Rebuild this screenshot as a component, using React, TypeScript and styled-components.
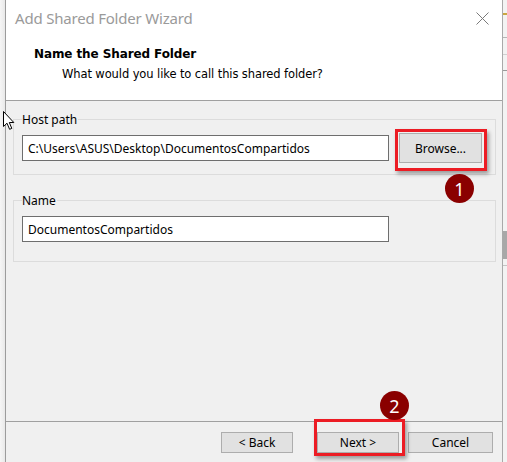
import React from "react";
import styled, { createGlobalStyle } from "styled-components";

const Global = createGlobalStyle`
  html, body { margin: 0; padding: 0; }
  body { width: 507px; height: 462px; overflow: hidden; background: #f4f4f4; }
  * { box-sizing: border-box; }
`;

const Page = styled.div`
  position: relative;
  display: flex;
  width: 507px;
  height: 462px;
  overflow: hidden;
  font-family: "Noto Sans", "Open Sans", sans-serif;
`;

const DesktopLeft = styled.div`
  width: 5px;
  background: linear-gradient(to right, #f6f6f6, #e9e9e9);
`;

const DesktopRight = styled.div`
  width: 4px;
  background: #f3f3f3;
  display: flex;
  flex-direction: column;
`;

const RightMark = styled.div<{ $h: number; $bg: string; $mt: number }>`
  height: ${(p) => p.$h}px;
  margin-top: ${(p) => p.$mt}px;
  background: ${(p) => p.$bg};
`;

const Window = styled.div`
  width: 498px;
  display: flex;
  flex-direction: column;
  border-left: 1px solid #9c9c9c;
  border-right: 1px solid #a9a9a9;
  background: #f0f0f0;
`;

const TitleBar = styled.div`
  height: 36px;
  background: #fff;
  display: flex;
  align-items: center;
  justify-content: space-between;
  padding: 0 13px 0 9px;
`;

const Title = styled.div`
  font-size: 15px;
  color: #9a9a9a;
  letter-spacing: -0.2px;
`;

const Header = styled.div`
  height: 65px;
  background: #fff;
  border-bottom: 1px solid #a0a0a0;
  padding: 11px 0 0 28px;
  display: flex;
  flex-direction: column;
`;

const HeaderTitle = styled.div`
  font-family: "DejaVu Sans", sans-serif;
  font-weight: bold;
  font-size: 12px;
  line-height: 15px;
  color: #000;
  letter-spacing: -0.1px;
`;

const HeaderSub = styled.div`
  font-family: "DejaVu Sans", sans-serif;
  font-size: 11.5px;
  line-height: 15px;
  color: #000;
  margin: 5px 0 0 28px;
  letter-spacing: -0.1px;
`;

const Body = styled.div`
  flex: 1;
  display: flex;
  flex-direction: column;
  padding: 10px 6px 0 7px;
  border-bottom: 1px solid #a0a0a0;
`;

const Group = styled.fieldset<{ $pt: number; $pb: number; $mt?: number }>`
  margin: ${(p) => p.$mt ?? 0}px 0 0 0;
  padding: ${(p) => p.$pt}px 13px ${(p) => p.$pb}px 8px;
  border: 1px solid #dcdcdc;
  min-width: 0;
`;

const Legend = styled.legend`
  padding: 0 1px 0 0;
  font-size: 12px;
  line-height: 16px;
  color: #000;
  position: relative;
  top: 1px;
`;

const Row = styled.div`
  display: flex;
  align-items: center;
  gap: 10px;
`;

const TextBox = styled.div`
  width: 367px;
  height: 26px;
  background: #fff;
  border: 1px solid #6e6e6e;
  padding-left: 5px;
  display: flex;
  align-items: center;
  font-size: 12px;
  color: #000;
  white-space: nowrap;
`;

const Button = styled.div<{ $w: number; $h: number; $mr?: number }>`
  width: ${(p) => p.$w}px;
  height: ${(p) => p.$h}px;
  margin-right: ${(p) => p.$mr ?? 0}px;
  background: #e1e1e1;
  border: 1px solid #adadad;
  display: flex;
  align-items: center;
  justify-content: center;
  font-size: 12px;
  color: #000;
`;

const Footer = styled.div`
  height: 40px;
  display: flex;
  justify-content: flex-end;
  align-items: flex-start;
  padding: 10px 9px 0 0;
`;

const Highlight = styled.div<{ $x: number; $y: number; $w: number; $h: number }>`
  position: absolute;
  left: ${(p) => p.$x}px;
  top: ${(p) => p.$y}px;
  width: ${(p) => p.$w}px;
  height: ${(p) => p.$h}px;
  border: 3px solid #ec1c24;
  box-shadow: 2px 3px 4px rgba(0, 0, 0, 0.35);
`;

const Badge = styled.div<{ $x: number; $y: number }>`
  position: absolute;
  left: ${(p) => p.$x}px;
  top: ${(p) => p.$y}px;
  width: 29px;
  height: 29px;
  border-radius: 50%;
  background: #8a0000;
  color: #fff;
  font-size: 18px;
  display: flex;
  align-items: center;
  justify-content: center;
  line-height: 1;
`;

const Cursor = styled.svg`
  position: absolute;
  left: 3px;
  top: 111px;
`;

export default function App() {
  return (
    <>
      <Global />
      <Page>
        <DesktopLeft />
        <Window>
          <TitleBar>
            <Title>Add Shared Folder Wizard</Title>
            <svg width="13" height="13" viewBox="0 0 13 13">
              <path d="M0.5 0.5 L12.5 12.5 M12.5 0.5 L0.5 12.5" stroke="#7a7a7a" strokeWidth="1" fill="none" />
            </svg>
          </TitleBar>
          <Header>
            <HeaderTitle>Name the Shared Folder</HeaderTitle>
            <HeaderSub>What would you like to call this shared folder?</HeaderSub>
          </Header>
          <Body>
            <Group $pt={6} $pb={11}>
              <Legend>Host path</Legend>
              <Row>
                <TextBox>C:\Users\ASUS\Desktop\DocumentosCompartidos</TextBox>
                <Button $w={83} $h={30}>Browse...</Button>
              </Row>
            </Group>
            <Group $pt={8} $pb={19} $mt={17}>
              <Legend>Name</Legend>
              <Row>
                <TextBox>DocumentosCompartidos</TextBox>
              </Row>
            </Group>
          </Body>
          <Footer>
            <Button $w={72} $h={21} $mr={24}>&lt; Back</Button>
            <Button $w={82} $h={21} $mr={9}>Next &gt;</Button>
            <Button $w={85} $h={21}>Cancel</Button>
          </Footer>
        </Window>
        <DesktopRight>
          <RightMark $h={2} $mt={13} $bg="#c9a640" />
          <RightMark $h={1} $mt={22} $bg="#b5b5b5" />
          <RightMark $h={1} $mt={16} $bg="#d0d0d0" />
          <RightMark $h={1} $mt={15} $bg="#9a9a9a" />
          <RightMark $h={28} $mt={160} $bg="#a8a8a8" />
          <RightMark $h={1} $mt={6} $bg="#c4c4c4" />
        </DesktopRight>
        <Highlight $x={395} $y={129} $w={92} $h={42} />
        <Highlight $x={314} $y={419} $w={91} $h={37} />
        <Badge $x={445} $y={174}>1</Badge>
        <Badge $x={380} $y={391}>2</Badge>
        <Cursor width="13" height="20" viewBox="0 0 13 20">
          <path d="M0.5 0.5 L0.5 15.5 L4 12.2 L6.6 18.3 L8.8 17.4 L6.3 11.5 L10.8 11.5 Z" fill="#fff" stroke="#000" strokeWidth="1" strokeLinejoin="round" />
        </Cursor>
      </Page>
    </>
  );
}
